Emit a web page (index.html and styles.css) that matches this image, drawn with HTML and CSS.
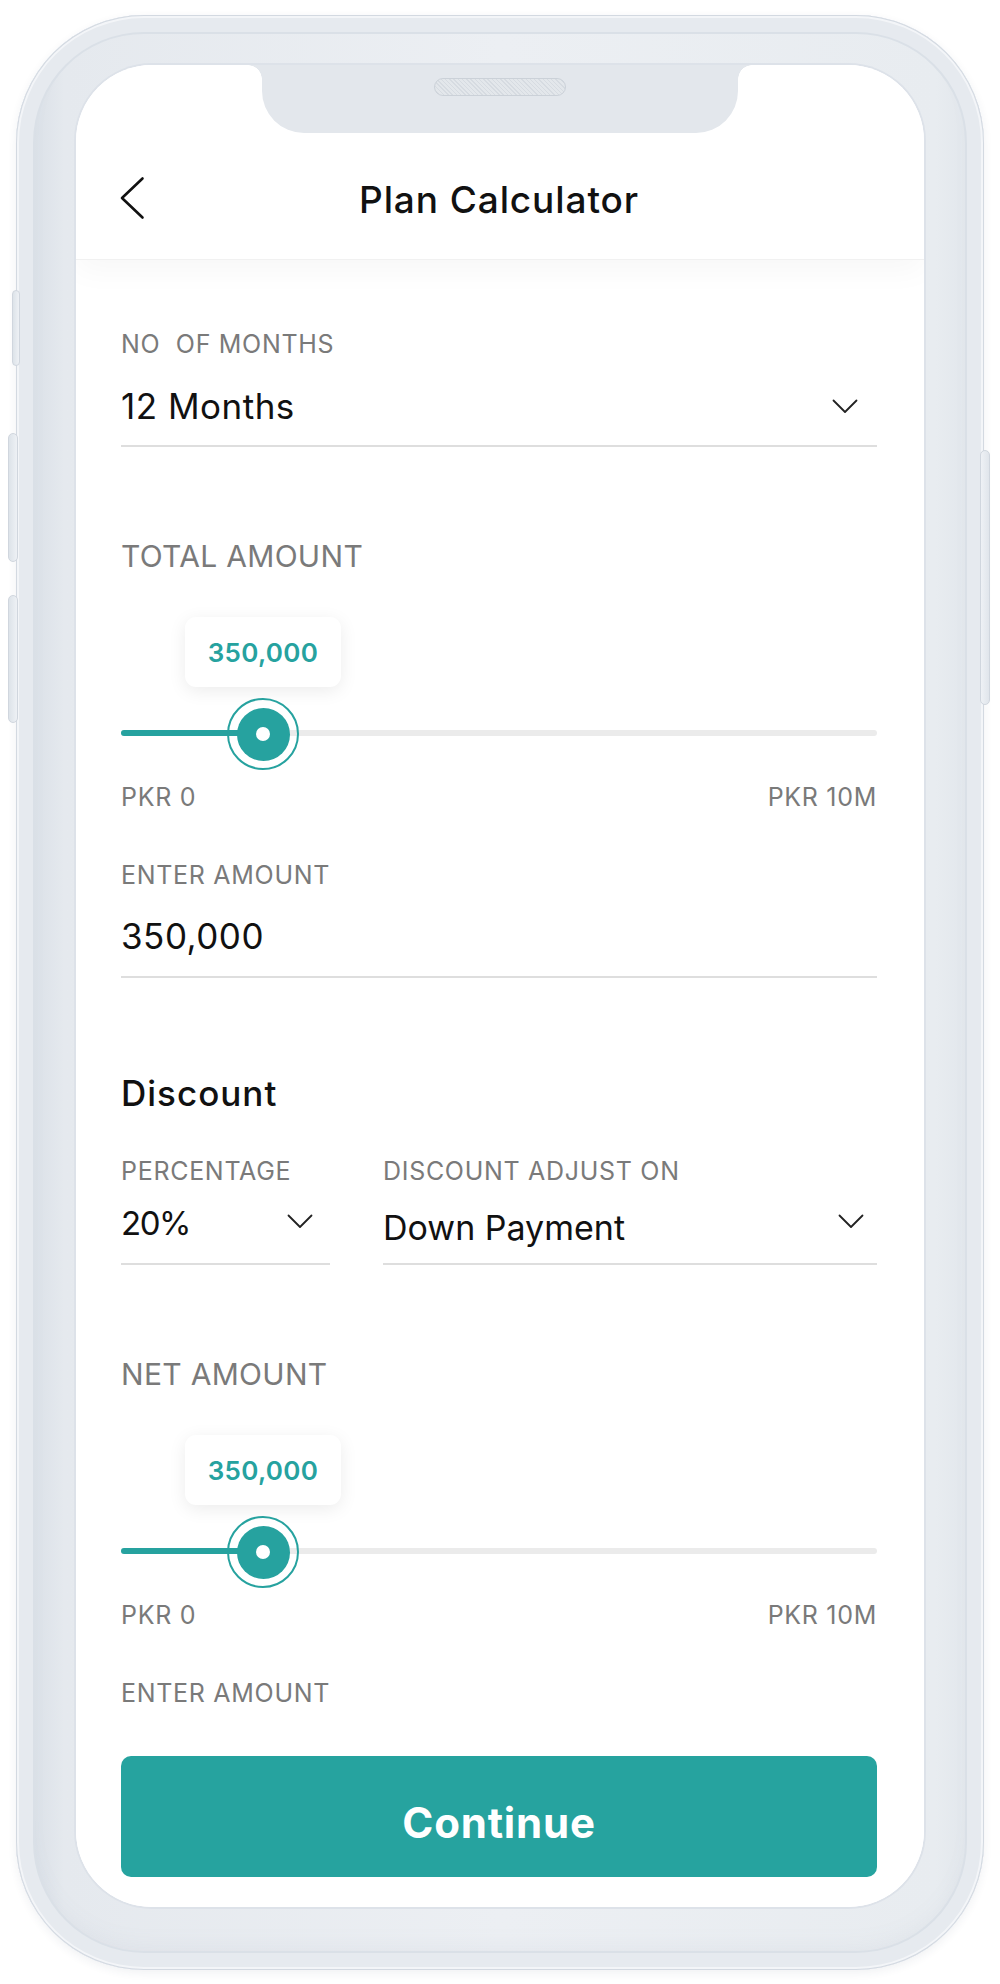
FILE: index.html
```html
<!DOCTYPE html>
<html lang="en">
<head>
<meta charset="utf-8">
<title>Plan Calculator</title>
<link rel="stylesheet" href="styles.css">
</head>
<body>
<div class="phone">
  <span class="side-btn side-btn--mute"></span>
  <span class="side-btn side-btn--vol-up"></span>
  <span class="side-btn side-btn--vol-down"></span>
  <span class="side-btn side-btn--power"></span>
  <div class="screen">
    <div class="notch"><span class="speaker"></span></div>
    <header class="app-header">
      <button class="back-btn" aria-label="Back">
        <svg width="26" height="44" viewBox="0 0 26 44"><path d="M23.5 2.5 L3 22 L23.5 41.5" fill="none" stroke="#111" stroke-width="2.6" stroke-linecap="round" stroke-linejoin="round"/></svg>
      </button>
      <h1 class="app-title">Plan Calculator</h1>
    </header>

    <main class="content">
      <section class="field field--months">
        <div class="label">NO&nbsp; OF MONTHS</div>
        <div class="value-row">
          <span class="value">12 Months</span>
          <svg class="chev" width="26" height="15" viewBox="0 0 26 15"><path d="M1.5 1.5 L13 13 L24.5 1.5" fill="none" stroke="#222" stroke-width="1.8" stroke-linecap="round" stroke-linejoin="round"/></svg>
        </div>
      </section>

      <div class="section-label section-label--total">TOTAL AMOUNT</div>
      <div class="slider">
        <div class="track">
          <div class="fill" style="width:142px"></div>
        </div>
        <div class="handle" style="left:142px">
          <div class="bubble">350,000</div>
          <div class="thumb"><span class="knob"><span class="dot"></span></span></div>
        </div>
      </div>
      <div class="range">
        <span>PKR 0</span>
        <span>PKR 10M</span>
      </div>

      <section class="field field--amount">
        <div class="label">ENTER AMOUNT</div>
        <div class="value-row">
          <span class="value">350,000</span>
        </div>
      </section>

      <h2 class="group-title">Discount</h2>
      <div class="field-pair">
        <section class="field field--pct">
          <div class="label">PERCENTAGE</div>
          <div class="value-row">
            <span class="value value--pct">20%</span>
            <svg class="chev" width="26" height="15" viewBox="0 0 26 15"><path d="M1.5 1.5 L13 13 L24.5 1.5" fill="none" stroke="#222" stroke-width="1.8" stroke-linecap="round" stroke-linejoin="round"/></svg>
          </div>
        </section>
        <section class="field field--adjust">
          <div class="label">DISCOUNT ADJUST ON</div>
          <div class="value-row">
            <span class="value value--low">Down Payment</span>
            <svg class="chev" width="26" height="15" viewBox="0 0 26 15"><path d="M1.5 1.5 L13 13 L24.5 1.5" fill="none" stroke="#222" stroke-width="1.8" stroke-linecap="round" stroke-linejoin="round"/></svg>
          </div>
        </section>
      </div>

      <div class="section-label section-label--net">NET AMOUNT</div>
      <div class="slider">
        <div class="track">
          <div class="fill" style="width:142px"></div>
        </div>
        <div class="handle" style="left:142px">
          <div class="bubble">350,000</div>
          <div class="thumb"><span class="knob"><span class="dot"></span></span></div>
        </div>
      </div>
      <div class="range">
        <span>PKR 0</span>
        <span>PKR 10M</span>
      </div>

      <div class="label label--last">ENTER AMOUNT</div>
    </main>

    <footer class="app-footer">
      <button class="continue-btn">Continue</button>
    </footer>
  </div>
</div>
</body>
</html>
```

FILE: styles.css
```css
* { box-sizing: border-box; }

html, body {
  margin: 0;
  padding: 0;
  background: #ffffff;
}

body {
  font-family: "Inter", "Noto Sans", "Liberation Sans", sans-serif;
  color: #111;
  width: 1000px;
  height: 1984px;
  overflow: hidden;
}

/* ---------- phone frame ---------- */
.phone {
  position: relative;
  width: 968px;
  height: 1955px;
  margin: 15px 0 0 16px;
  padding: 50px 60px 63px 60px;
  border-radius: 128px;
  background: linear-gradient(90deg, #d5dce4 0%, #e5e9ee 5%, #eceff3 50%, #e8ecf0 95%, #dfe4ea 100%);
  box-shadow:
    inset 0 0 0 1px #d3d9e1,
    inset 0 0 0 3px #f3f5f8,
    inset 0 0 0 17px #e6eaef,
    inset 0 0 0 19px #dae0e7,
    inset 0 -14px 30px rgba(120, 135, 155, 0.12),
    0 3px 10px rgba(40, 60, 90, 0.07);
}

.side-btn {
  position: absolute;
  width: 10px;
  border-radius: 5px;
  background: linear-gradient(90deg, #dde3e9, #eef1f5);
  border: 1px solid #d0d6de;
}
.side-btn--mute { left: -4px; top: 275px; height: 76px; width: 8px; }
.side-btn--vol-up { left: -8px; top: 418px; height: 129px; }
.side-btn--vol-down { left: -8px; top: 580px; height: 128px; }
.side-btn--power { right: -6px; top: 435px; height: 255px; background: linear-gradient(90deg, #eef1f5, #e0e5eb); }

.screen {
  position: relative;
  height: 100%;
  border-radius: 76px;
  background: #ffffff;
  overflow: hidden;
  display: flex;
  flex-direction: column;
  box-shadow: 0 0 0 2px #dde2e9;
}

.notch {
  position: absolute;
  top: 0;
  left: 186px;
  width: 476px;
  height: 68px;
  background: #e3e7ec;
  border-radius: 0 0 42px 42px;
  z-index: 5;
  display: flex;
  justify-content: center;
}
.notch::before,
.notch::after {
  content: "";
  position: absolute;
  top: 0;
  width: 14px;
  height: 14px;
}
.notch::before {
  left: -14px;
  background: radial-gradient(circle at 0 100%, transparent 13.5px, #e3e7ec 14px);
}
.notch::after {
  right: -14px;
  background: radial-gradient(circle at 100% 100%, transparent 13.5px, #e3e7ec 14px);
}
.speaker {
  margin-top: 13px;
  width: 132px;
  height: 18px;
  border-radius: 9px;
  background: repeating-linear-gradient(45deg, #d6dbe1 0 1px, #e3e7eb 1px 3px);
  border: 1.5px solid #cbd1d8;
}

/* ---------- header ---------- */
.app-header {
  position: relative;
  z-index: 2;
  flex: 0 0 195px;
  padding: 76px 47px 0 45px;
  display: flex;
  align-items: flex-start;
  justify-content: center;
  border-bottom: 1px solid #f1f1f1;
  box-shadow: 0 10px 30px rgba(0, 0, 0, 0.035);
  background: #fff;
}
.back-btn {
  position: absolute;
  left: 43px;
  top: 111px;
  padding: 0;
  border: 0;
  background: none;
  width: 26px;
  height: 44px;
}
.back-btn svg { display: block; }
.app-title {
  margin: 0;
  height: 118px;
  line-height: 118px;
  font-size: 37px;
  font-weight: 500;
  color: #111;
  letter-spacing: 0.9px;
}

/* ---------- content ---------- */
.content {
  flex: 1 1 auto;
  overflow: hidden;
  padding: 0 47px 0 45px;
  display: flex;
  flex-direction: column;
}

.label {
  height: 30px;
  line-height: 30px;
  font-size: 25px;
  letter-spacing: 0.7px;
  color: #7a7a7a;
  white-space: nowrap;
}
.label--last { margin-top: 48px; }

.field {
  border-bottom: 2px solid #dedede;
  padding-bottom: 19px;
}
.field--months { margin-top: 69px; }
.field--months .value-row { margin-top: 27px; }
.field--months .chev { margin-right: 19px; }

.value-row {
  display: flex;
  align-items: center;
  justify-content: space-between;
  height: 40px;
}
.value {
  font-size: 35px;
  line-height: 40px;
  letter-spacing: 0.5px;
  color: #111;
  white-space: nowrap;
}
.value--low { padding-top: 9px; letter-spacing: 0; font-size: 34px; }
.value--pct { letter-spacing: -1.5px; font-size: 33px; }
.chev { flex: 0 0 auto; display: block; }

.section-label {
  height: 36px;
  line-height: 36px;
  font-size: 30px;
  letter-spacing: 0.3px;
  color: #7a7a7a;
}
.section-label--total { margin-top: 91px; }
.section-label--net { margin-top: 91px; }

/* slider */
.slider {
  position: relative;
  margin-top: 43px;
  padding-top: 113px;
  padding-bottom: 34px;
}
.track {
  position: relative;
  height: 6px;
  border-radius: 3px;
  background: #ebebeb;
}
.fill {
  position: absolute;
  left: 0;
  top: 0;
  bottom: 0;
  border-radius: 3px 0 0 3px;
  background: #26a29f;
}
.handle {
  position: absolute;
  top: 0;
  width: 0;
  height: 100%;
}
.bubble {
  position: absolute;
  top: 0;
  left: -78px;
  width: 156px;
  height: 70px;
  border-radius: 11px;
  background: #fff;
  box-shadow: 0 4px 18px rgba(0, 0, 0, 0.08);
  color: #26a29f;
  font-size: 26px;
  font-weight: 600;
  letter-spacing: 0.3px;
  line-height: 72px;
  text-align: center;
}
.thumb {
  position: absolute;
  top: 81px;
  left: -36px;
  width: 72px;
  height: 72px;
  border-radius: 50%;
  border: 2.5px solid #26a29f;
  display: flex;
  align-items: center;
  justify-content: center;
}
.knob {
  width: 53px;
  height: 53px;
  border-radius: 50%;
  background: #26a29f;
  display: flex;
  align-items: center;
  justify-content: center;
}
.dot {
  width: 14px;
  height: 14px;
  border-radius: 50%;
  background: #fff;
}

.range {
  margin-top: 12px;
  height: 30px;
  line-height: 30px;
  font-size: 25px;
  letter-spacing: 0.7px;
  color: #7a7a7a;
  display: flex;
  justify-content: space-between;
}

.field--amount { margin-top: 48px; padding-bottom: 20px; }
.field--amount .value-row { margin-top: 26px; }

.group-title {
  margin: 95px 0 0;
  height: 40px;
  line-height: 40px;
  font-size: 35px;
  font-weight: 500;
  letter-spacing: 1px;
  color: #111;
}

.field-pair {
  margin-top: 43px;
  display: grid;
  grid-template-columns: 209px 1fr;
  column-gap: 53px;
}
.field-pair .value-row { margin-top: 17px; }
.field-pair .field { padding-bottom: 20px; }
.field--pct .chev { margin-right: 17px; margin-top: -4px; }
.field--adjust .chev { margin-right: 13px; margin-top: -4px; }

/* ---------- footer ---------- */
.app-footer {
  flex: 0 0 171px;
  padding: 20px 47px 30px 45px;
  background: #fff;
}
.continue-btn {
  display: block;
  width: 100%;
  height: 121px;
  padding: 12px 0 0;
  border: 0;
  border-radius: 10px;
  background: #26a39f;
  color: #fff;
  font-family: "Inter", "Liberation Sans", sans-serif;
  font-size: 42px;
  font-weight: 700;
  letter-spacing: 0.8px;
}
```
